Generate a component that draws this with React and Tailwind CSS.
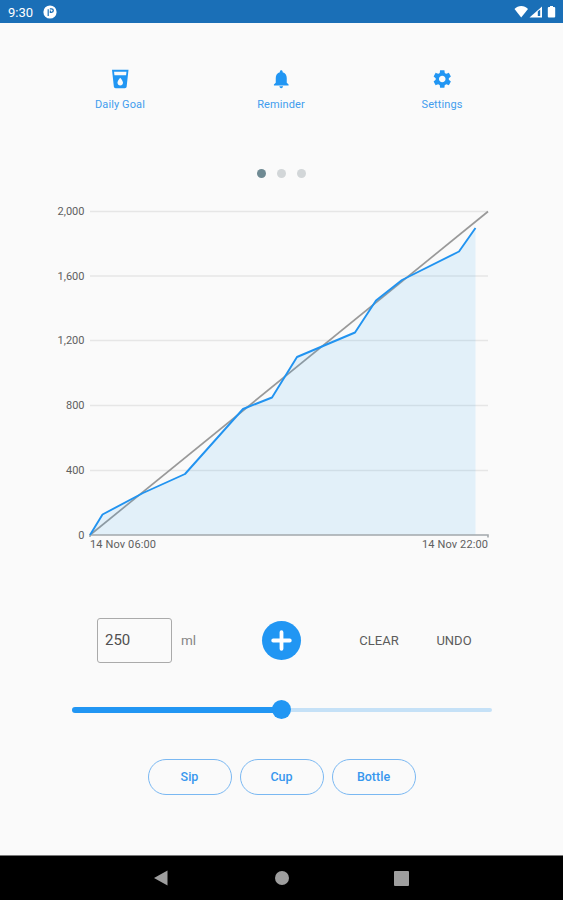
const GRID = [
    { label: '2,000', y: 211.5 },
    { label: '1,600', y: 276 },
    { label: '1,200', y: 340.5 },
    { label: '800', y: 405.5 },
    { label: '400', y: 470.5 },
    { label: '0', y: 535 },
];

const INTAKE = '90,535 102.5,514.5 143,493 185,474 243,409 272,397.5 297,357 355,332.5 376,300.5 402,280 459,251.5 475.5,228';

const StatusBar = () => (
    <header className="flex h-[23px] items-center bg-[#1a6fb7] pl-2 pr-[7px] pt-px text-white">
        <span className="text-[13px] leading-none">9:30</span>
        <svg className="ml-[10px]" width="14" height="14" viewBox="0 0 14 14">
            <circle cx="7" cy="7" r="6.6" fill="#fff" />
            <path d="M5.2 11V4.2" fill="none" stroke="#1a6fb7" strokeWidth="1.2" />
            <path d="M6.8 3.8h1.7a1.7 1.7 0 0 1 0 3.6H7.4V5.6" fill="none" stroke="#1a6fb7" strokeWidth="1.3" />
        </svg>
        <svg className="ml-auto" width="42" height="14" viewBox="0 0 42 14">
            <path d="M0.5 4C4-0.1 10.5-0.1 14 4L7.2 12.5Z" fill="#fff" />
            <path d="M15.5 12.5L28 1.5v11Z" fill="#fff" />
            <path d="M23.8 6.6l2.4-2.2v6.6h-2.4Z" fill="#1a6fb7" />
            <path d="M36 1h3v1h1.2q1 0 1 1v8.5q0 1-1 1h-5.4q-1 0-1-1V3q0-1 1-1H36Z" fill="#fff" />
        </svg>
    </header>
);

const NavItem = ({ label, path }) => (
    <a href="#" className="flex w-[161px] flex-col items-center gap-[8px] text-[#2196f3]">
        <svg width="22.5" height="22.5" viewBox="0 0 24 24" fill="currentColor">
            <path d={path} />
        </svg>
        <span className="text-[11px] leading-[14px] tracking-[0.1px] text-[#429dee]">{label}</span>
    </a>
);

const IntakeChart = () => (
    <svg
        className="mt-[22px] block shrink-0"
        width="563"
        height="360"
        viewBox="0 200 563 360"
        fontSize="11"
        fill="#606060"
    >
        {GRID.map((row) => (
            <g key={row.label}>
                {row.y < 535 && <path d={`M90 ${row.y}H488`} stroke="#e6e6e6" strokeWidth="1.3" />}
                <text x="84.5" y={row.y + 3.7} textAnchor="end">{row.label}</text>
            </g>
        ))}
        <path d="M90 535L488 211.5" stroke="#999" strokeWidth="1.7" />
        <polygon points={`${INTAKE} 475.5,535`} fill="#2ba6f5" fillOpacity="0.115" />
        <path d="M90 537V535H488V537.5" fill="none" stroke="#a3a8ac" strokeWidth="1.6" />
        <polyline points={INTAKE} fill="none" stroke="#2193f0" strokeWidth="1.9" strokeLinejoin="round" />
        <text x="90" y="548" textLength="66">14 Nov 06:00</text>
        <text x="422" y="548" textLength="66">14 Nov 22:00</text>
    </svg>
);

const PresetButton = ({ children }) => (
    <button className="h-9 w-[84px] rounded-full border border-[#7ab8f2] text-[12.5px] font-medium text-[#3797ee]">
        {children}
    </button>
);

const App = () => {
    return (
        <div className="flex h-[900px] w-[563px] flex-col overflow-hidden bg-[#fafafa] font-['Roboto',sans-serif]">
            <StatusBar />

            <nav className="mt-[45px] flex h-11 justify-center pr-px">
                <NavItem
                    label="Daily Goal"
                    path="M3 2l2.01 18.23C5.13 21.23 5.97 22 7 22h10c1.03 0 1.87-.77 1.99-1.77L21 2H3zm9 17c-1.66 0-3-1.34-3-3 0-2 3-5.4 3-5.4s3 3.4 3 5.4c0 1.66-1.34 3-3 3zm6.33-11H5.67l-.44-4h13.55l-.45 4z"
                />
                <NavItem
                    label="Reminder"
                    path="M12 22c1.1 0 2-.9 2-2h-4c0 1.1.89 2 2 2zm6-6v-5c0-3.07-1.64-5.64-4.5-6.32V4c0-.83-.67-1.5-1.5-1.5s-1.5.67-1.5 1.5v.68C7.63 5.36 6 7.92 6 11v5l-2 2v1h16v-1l-2-2z"
                />
                <NavItem
                    label="Settings"
                    path="M19.14 12.94c.04-.3.06-.61.06-.94 0-.32-.02-.64-.07-.94l2.03-1.58c.18-.14.23-.41.12-.61l-1.92-3.32c-.12-.22-.37-.29-.59-.22l-2.39.96c-.5-.38-1.03-.7-1.62-.94l-.36-2.54c-.04-.24-.24-.41-.48-.41h-3.84c-.24 0-.43.17-.47.41l-.36 2.54c-.59.24-1.13.57-1.62.94l-2.39-.96c-.22-.08-.47 0-.59.22L2.74 8.87c-.12.21-.08.47.12.61l2.03 1.58c-.05.3-.09.63-.09.94s.02.64.07.94l-2.03 1.58c-.18.14-.23.41-.12.61l1.92 3.32c.12.22.37.29.59.22l2.39-.96c.5.38 1.03.7 1.62.94l.36 2.54c.05.24.24.41.48.41h3.84c.24 0 .44-.17.47-.41l.36-2.54c.59-.24 1.13-.56 1.62-.94l2.39.96c.22.08.47 0 .59-.22l1.92-3.32c.12-.22.07-.47-.12-.61l-2.01-1.58zM12 15.6c-1.98 0-3.6-1.62-3.6-3.6s1.62-3.6 3.6-3.6 3.6 1.62 3.6 3.6-1.62 3.6-3.6 3.6z"
                />
            </nav>

            <div className="mt-[57px] flex justify-center gap-[11px]">
                <span className="size-[9px] rounded-full bg-[#6f8a93]" />
                <span className="size-[9px] rounded-full bg-[#d2d6d8]" />
                <span className="size-[9px] rounded-full bg-[#d2d6d8]" />
            </div>

            <IntakeChart />

            <div className="mt-[58px] flex h-[45px] items-center pl-[97px]">
                <input
                    className="h-[45px] w-[75px] rounded-[3px] border border-[#aaa] px-[7px] pb-0.5 text-[15px] text-[#505050]"
                    defaultValue="250"
                />
                <span className="ml-[9px] w-[81px] text-[13.5px] text-[#858585]">ml</span>
                <button className="flex size-[39px] items-center justify-center rounded-full bg-[#2196f3]">
                    <svg width="21" height="21" viewBox="0 0 21 21" stroke="#fff" strokeWidth="3.8" strokeLinecap="round">
                        <path d="M10.5 2.2v16.6M2.2 10.5h16.6" />
                    </svg>
                </button>
                <button className="ml-[58px] w-10 text-[13px] text-[#5c5c5c]">CLEAR</button>
                <button className="ml-[37px] w-9 text-[13px] text-[#5c5c5c]">UNDO</button>
            </div>

            <div className="mt-[37px] flex h-[19px] items-center pl-[72px]">
                <div className="h-[6px] w-[201px] rounded-l-full bg-[#2196f3]" />
                <div className="z-10 -ml-px size-[19px] rounded-full bg-[#2196f3]" />
                <div className="-ml-px h-1 w-[202px] rounded-r-sm bg-[#c5e1f7]" />
            </div>

            <div className="mt-10 flex justify-center gap-2">
                <PresetButton>Sip</PresetButton>
                <PresetButton>Cup</PresetButton>
                <PresetButton>Bottle</PresetButton>
            </div>

            <footer className="mt-auto flex h-[45px] items-center justify-center gap-[105px] border-t border-[#777] bg-black">
                <svg width="16" height="16" viewBox="0 0 16 16" fill="#9e9e9e">
                    <path d="M0 8L13.5 0.5v15Z" />
                </svg>
                <span className="size-[14px] rounded-full bg-[#9e9e9e]" />
                <span className="size-[15px] rounded-[1px] bg-[#9e9e9e]" />
            </footer>
        </div>
    );
};

export default App;
